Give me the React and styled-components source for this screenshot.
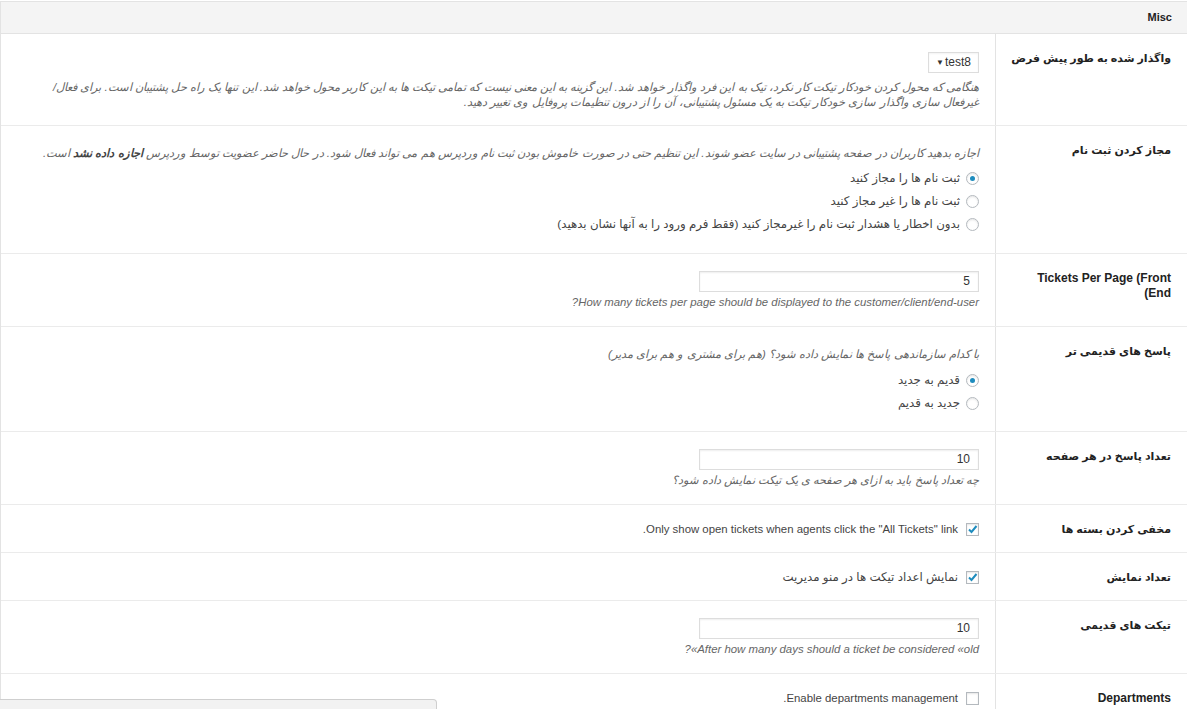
import React from 'react';
import styled, { createGlobalStyle } from 'styled-components';

const GlobalStyle = createGlobalStyle`
  html, body {
    margin: 0;
    padding: 0;
    background: #fff;
    overflow: hidden;
  }
  body {
    font-family: "Liberation Sans", "DejaVu Sans", sans-serif;
    font-size: 12px;
    color: #444;
  }
`;

const Panel = styled.div`
  direction: rtl;
  width: 1187px;
  margin-top: 1px;
  border-top: 1px solid #e3e3e3;
  border-left: 1px solid #e3e3e3;
`;

const Header = styled.h3`
  margin: 0;
  height: 31px;
  line-height: 31px;
  padding: 0 16px;
  background: #f4f4f4;
  border-bottom: 1px solid #e3e3e3;
  font-size: 11px;
  font-weight: bold;
  color: #222;
`;

const Row = styled.div`
  display: grid;
  grid-template-columns: 193px 1fr;
  border-bottom: 1px solid #ebebeb;
`;

const Label = styled.div`
  padding: 17px 17px 10px 14px;
  border-left: 1px solid #e3e3e3;
  font-weight: bold;
  font-size: ${(p) => (p.$latin ? '12px' : '11px')};
  line-height: 15px;
  color: #222;
`;

/* a lone closing bracket shown mirrored at the line start, as the old bidi did */
const Mirror = styled.span`
  unicode-bidi: isolate;
  direction: rtl;
`;

const Cell = styled.div`
  padding: ${(p) => p.$pad || '17px 16px 16px 10px'};
  line-height: 15px;
`;

const Description = styled.p`
  margin: ${(p) => p.$gap || '3px'} 0 0;
  font-style: italic;
  font-size: 11.4px;
  line-height: 15px;
  color: #666;

  b {
    font-weight: bold;
    color: #444;
  }
`;

const Select = styled.div`
  display: inline-flex;
  align-items: center;
  justify-content: space-between;
  box-sizing: border-box;
  width: 51px;
  height: 21px;
  padding: 0 7px 0 7px;
  border: 1px solid #ddd;
  background: #fff;
  color: #333;
  font-size: 12px;
  box-shadow: inset 0 1px 2px rgba(0, 0, 0, 0.05);
`;

const Caret = styled.span`
  font-size: 8px;
  color: #333;
`;

const TextInput = styled.div`
  box-sizing: border-box;
  width: 280px;
  height: 21px;
  padding: 0 8px;
  line-height: 19px;
  border: 1px solid #ddd;
  background: #fff;
  color: #333;
  font-size: 12px;
  box-shadow: inset 0 1px 2px rgba(0, 0, 0, 0.07);
`;

const Options = styled.div`
  margin-top: ${(p) => p.$gap || '6px'};
  display: flex;
  flex-direction: column;
`;

const Option = styled.div`
  display: flex;
  align-items: center;
  gap: 6px;
  height: 23px;
  font-size: 11.8px;
  color: #444;
`;

const CheckLine = styled.div`
  display: flex;
  align-items: center;
  gap: 8px;
  height: 15px;
  font-size: ${(p) => (p.$latin ? '11.4px' : '11.8px')};
  color: #444;
`;

const Radio = styled.span`
  position: relative;
  flex: none;
  box-sizing: border-box;
  width: 13px;
  height: 13px;
  border-radius: 50%;
  border: 1px solid #b4b9be;
  background: #fff;
  box-shadow: inset 0 1px 2px rgba(0, 0, 0, 0.1);

  &::after {
    content: '';
    display: ${(p) => (p.$checked ? 'block' : 'none')};
    position: absolute;
    top: 3px;
    left: 3px;
    width: 5px;
    height: 5px;
    border-radius: 50%;
    background: #1e8cbe;
  }
`;

const Box = styled.span`
  flex: none;
  display: inline-flex;
  align-items: center;
  justify-content: center;
  box-sizing: border-box;
  width: 13px;
  height: 13px;
  border: 1px solid #b4b9be;
  background: #fff;
  box-shadow: inset 0 1px 2px rgba(0, 0, 0, 0.1);
`;

const StatusBar = styled.div`
  position: fixed;
  left: 0;
  bottom: -12px;
  width: 437px;
  height: 22px;
  box-sizing: border-box;
  padding: 7px 0 0 60px;
  background: #f2f2f2;
  border: 1px solid #cfcfcf;
  border-left: none;
  border-top-right-radius: 4px;
  font-size: 11px;
  color: #555;
  white-space: nowrap;
  overflow: hidden;
`;

const Checkbox = ({ checked }) => (
  <Box>
    {checked && (
      <svg width="11" height="11" viewBox="0 0 11 11">
        <path d="M2 5.5 L4.5 8 L9.5 2" fill="none" stroke="#1e8cbe" strokeWidth="2" />
      </svg>
    )}
  </Box>
);

const App = () => (
  <>
    <GlobalStyle />
    <Panel>
      <Header>Misc</Header>

      <Row>
        <Label>واگذار شده به طور پیش فرض</Label>
        <Cell $pad="18px 16px 15px 10px">
          <Select>
            <span>test8</span>
            <Caret>▼</Caret>
          </Select>
          <Description $gap="7px">
            هنگامی که محول کردن خودکار تیکت کار نکرد، تیک به این فرد واگذار خواهد شد. این گزینه به این معنی نیست که تمامی تیکت ها به این کاربر محول خواهد شد. این تنها یک راه حل پشتیبان است. برای فعال/
            <br />
            غیرفعال سازی واگذار سازی خودکار تیکت به یک مسئول پشتیبانی، آن را از درون تنظیمات پروفایل وی تغییر دهید.
          </Description>
        </Cell>
      </Row>

      <Row>
        <Label>مجاز کردن ثبت نام</Label>
        <Cell $pad="20px 16px 17px 10px">
          <Description $gap="0">
            اجازه بدهید کاربران در صفحه پشتیبانی در سایت عضو شوند. این تنظیم حتی در صورت خاموش بودن ثبت نام وردپرس هم می تواند فعال شود. در حال حاضر عضویت توسط وردپرس <b>اجازه داده نشد</b> است.
          </Description>
          <Options>
            <Option><Radio $checked />ثبت نام ها را مجاز کنید</Option>
            <Option><Radio />ثبت نام ها را غیر مجاز کنید</Option>
            <Option><Radio />بدون اخطار یا هشدار ثبت نام را غیرمجاز کنید (فقط فرم ورود را به آنها نشان بدهید)</Option>
          </Options>
        </Cell>
      </Row>

      <Row>
        <Label $latin>Tickets Per Page (Front End<Mirror>)</Mirror></Label>
        <Cell>
          <TextInput>5</TextInput>
          <Description>How many tickets per page should be displayed to the customer/client/end-user?</Description>
        </Cell>
      </Row>

      <Row>
        <Label>پاسخ های قدیمی تر</Label>
        <Cell $pad="20px 16px 16px 10px">
          <Description $gap="0">با کدام سازماندهی پاسخ ها نمایش داده شود؟ (هم برای مشتری و هم برای مدیر)</Description>
          <Options $gap="7px">
            <Option><Radio $checked />قدیم به جدید</Option>
            <Option><Radio />جدید به قدیم</Option>
          </Options>
        </Cell>
      </Row>

      <Row>
        <Label>تعداد پاسخ در هر صفحه</Label>
        <Cell>
          <TextInput>10</TextInput>
          <Description>چه تعداد پاسخ باید به ازای هر صفحه ی یک تیکت نمایش داده شود؟</Description>
        </Cell>
      </Row>

      <Row>
        <Label>مخفی کردن بسته ها</Label>
        <Cell $pad="17px 16px 15px 10px">
          <CheckLine $latin>
            <Checkbox checked />
            Only show open tickets when agents click the "All Tickets" link.
          </CheckLine>
        </Cell>
      </Row>

      <Row>
        <Label>تعداد نمایش</Label>
        <Cell $pad="17px 16px 15px 10px">
          <CheckLine>
            <Checkbox checked />
            نمایش اعداد تیکت ها در منو مدیریت
          </CheckLine>
        </Cell>
      </Row>

      <Row>
        <Label>تیکت های قدیمی</Label>
        <Cell>
          <TextInput>10</TextInput>
          <Description>After how many days should a ticket be considered «old»?</Description>
        </Cell>
      </Row>

      <Row>
        <Label $latin>Departments</Label>
        <Cell $pad="17px 16px 15px 10px">
          <CheckLine $latin>
            <Checkbox />
            Enable departments management.
          </CheckLine>
        </Cell>
      </Row>
    </Panel>
    <StatusBar>localhost/wordpress/wp-admin/edit.php?post_type=ticket&amp;page=settings</StatusBar>
  </>
);

export default App;
